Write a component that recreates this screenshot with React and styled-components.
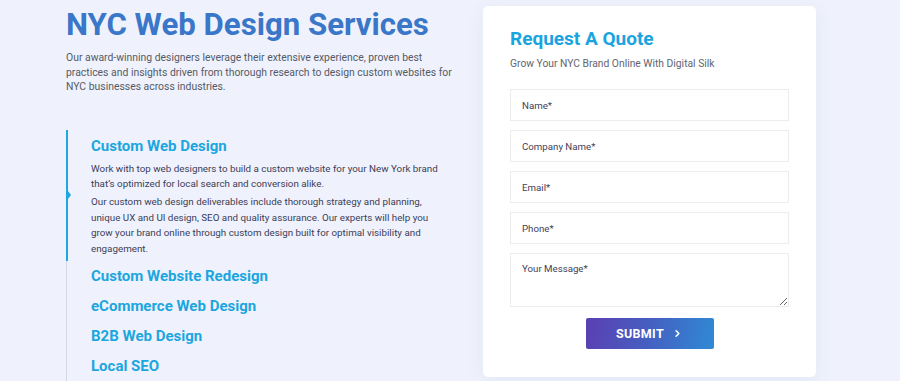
import React from 'react'
import styled, { createGlobalStyle } from 'styled-components'
import { ChevronRight } from 'lucide-react'

const GlobalStyle = createGlobalStyle`
  html, body {
    margin: 0;
    padding: 0;
    background: #eff2fc;
    font-family: Roboto, "Liberation Sans", Arial, sans-serif;
  }
`

const Page = styled.div`
  display: flex;
  align-items: flex-start;
  width: 900px;
  height: 381px;
  overflow: hidden;
  padding-left: 66px;
  box-sizing: border-box;
`

const Intro = styled.div`
  width: 386px;
  padding-top: 6px;
  flex-shrink: 0;
`

const Title = styled.h1`
  margin: 0;
  font-size: 31.2px;
  line-height: 38px;
  font-weight: 700;
  color: #3a77c9;
  white-space: nowrap;
`

const Lead = styled.p`
  margin: 7px 0 0;
  width: 392px;
  font-size: 10.4px;
  line-height: 14.5px;
  color: #555a66;
`

const ServiceList = styled.div`
  margin-top: 35px;
  border-left: 1px solid #d3d8e4;
`

const ServiceItem = styled.div`
  position: relative;
  padding: ${p => (p.$active ? '6px 0 2px 23px' : '5px 0 5px 24px')};
  margin-left: ${p => (p.$active ? '-1px' : '0')};
  border-left: ${p => (p.$active ? '2px solid #1ea7e1' : 'none')};

  ${p =>
    p.$active &&
    `
    &::after {
      content: '';
      position: absolute;
      left: 0;
      top: 50%;
      margin-top: -4px;
      border-top: 4px solid transparent;
      border-bottom: 4px solid transparent;
      border-left: 3px solid #1ea7e1;
    }
  `}
`

const ServiceTitle = styled.h3`
  margin: 0;
  font-size: 15px;
  line-height: 20px;
  font-weight: 700;
  color: #1ba6df;
`

const ServiceBody = styled.div`
  margin-top: 5px;
  width: 352px;

  p {
    margin: 0 0 3px;
    font-size: 9.8px;
    line-height: 15.4px;
    color: #3c3d57;
  }
`

const Card = styled.form`
  margin-top: 6px;
  margin-left: 31px;
  width: 333px;
  box-sizing: border-box;
  padding: 21px 27px 28px;
  background: #fff;
  border-radius: 5px;
  box-shadow: 0 4px 18px rgba(90, 100, 160, 0.08);
  display: flex;
  flex-direction: column;
`

const CardTitle = styled.h2`
  margin: 0;
  font-size: 19px;
  line-height: 24px;
  font-weight: 700;
  color: #1aa4df;
`

const CardSub = styled.p`
  margin: 7px 0 0;
  font-size: 10.3px;
  line-height: 12px;
  color: #62656f;
`

const Fields = styled.div`
  margin-top: 19px;
  display: flex;
  flex-direction: column;
  gap: 9px;
`

const fieldStyle = `
  width: 279px;
  box-sizing: border-box;
  border: 1px solid #ececf0;
  background: #fff;
  font-family: Roboto, "Liberation Sans", Arial, sans-serif;
  font-size: 9.7px;
  color: #3e3e5a;
  padding: 0 11px;
  outline: none;
  &::placeholder {
    color: #3e3e5a;
    opacity: 1;
  }
`

const Input = styled.input`
  ${fieldStyle}
  height: 32px;
`

const Message = styled.textarea`
  ${fieldStyle}
  height: 54px;
  padding-top: 9px;
  resize: vertical;
  display: block;
`

const Submit = styled.button`
  align-self: center;
  margin-top: 11px;
  width: 128px;
  height: 31px;
  border: none;
  border-radius: 2px;
  background: linear-gradient(100deg, #5b3fb2 0%, #4560c2 50%, #2f8ad4 100%);
  color: #fff;
  font-family: Roboto, "Liberation Sans", Arial, sans-serif;
  font-size: 12.5px;
  font-weight: 700;
  letter-spacing: 0.3px;
  display: flex;
  align-items: center;
  justify-content: center;
  gap: 8px;
  cursor: pointer;
`

const services = [
  'Custom Website Redesign',
  'eCommerce Web Design',
  'B2B Web Design',
  'Local SEO',
]

export default function App() {
  return (
    <>
      <GlobalStyle />
      <Page>
        <Intro>
          <Title>NYC Web Design Services</Title>
          <Lead>
            Our award-winning designers leverage their extensive experience, proven best
            practices and insights driven from thorough research to design custom websites for
            NYC businesses across industries.
          </Lead>
          <ServiceList>
            <ServiceItem $active>
              <ServiceTitle>Custom Web Design</ServiceTitle>
              <ServiceBody>
                <p>
                  Work with top web designers to build a custom website for your New York brand
                  that’s optimized for local search and conversion alike.
                </p>
                <p>
                  Our custom web design deliverables include thorough strategy and planning,
                  unique UX and UI design, SEO and quality assurance. Our experts will help you
                  grow your brand online through custom design built for optimal visibility and
                  engagement.
                </p>
              </ServiceBody>
            </ServiceItem>
            {services.map(s => (
              <ServiceItem key={s}>
                <ServiceTitle>{s}</ServiceTitle>
              </ServiceItem>
            ))}
          </ServiceList>
        </Intro>
        <Card onSubmit={e => e.preventDefault()}>
          <CardTitle>Request A Quote</CardTitle>
          <CardSub>Grow Your NYC Brand Online With Digital Silk</CardSub>
          <Fields>
            <Input placeholder="Name*" />
            <Input placeholder="Company Name*" />
            <Input placeholder="Email*" />
            <Input placeholder="Phone*" />
            <Message placeholder="Your Message*" />
          </Fields>
          <Submit type="submit">
            SUBMIT
            <ChevronRight size={11} strokeWidth={3.5} />
          </Submit>
        </Card>
      </Page>
    </>
  )
}
